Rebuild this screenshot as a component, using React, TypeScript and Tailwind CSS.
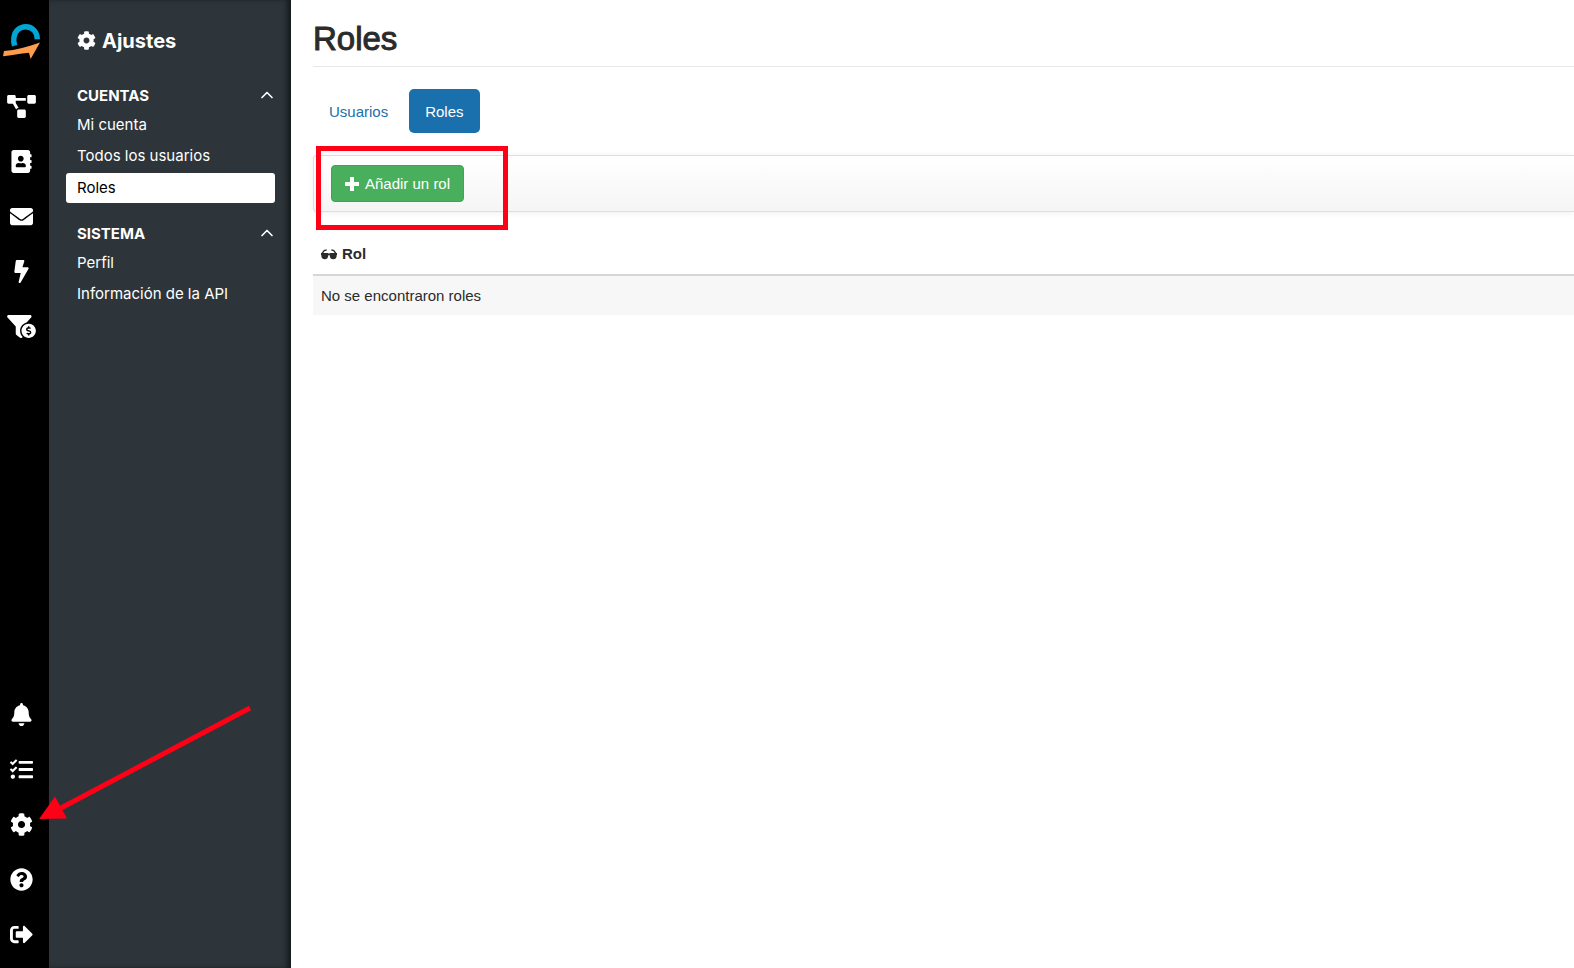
import React, { useState } from "react";
import { ChevronUp } from "lucide-react";
import {
  FaAddressBook,
  FaBell,
  FaBolt,
  FaCog,
  FaEnvelope,
  FaFunnelDollar,
  FaProjectDiagram,
  FaQuestionCircle,
  FaSignOutAlt,
  FaTasks,
} from "react-icons/fa";

const TOP_ICONS = [
  { label: "Canales", icon: <FaProjectDiagram className="w-[29px] h-[23px]" /> },
  { label: "Contactos", icon: <FaAddressBook className="w-[23px] h-[23px]" /> },
  { label: "Correo", icon: <FaEnvelope className="w-[23px] h-[23px]" /> },
  { label: "Automatizaciones", icon: <FaBolt className="w-[23px] h-[23px]" /> },
  { label: "Ventas", icon: <FaFunnelDollar className="w-[29px] h-[23px]" /> },
];

const BOTTOM_ICONS = [
  { id: "alerts", label: "Notificaciones", icon: <FaBell className="w-[23px] h-[23px]" /> },
  { id: "tasks", label: "Tareas", icon: <FaTasks className="w-[23px] h-[23px]" /> },
  { id: "settings", label: "Ajustes", icon: <FaCog className="w-[23px] h-[23px]" /> },
  { id: "help", label: "Ayuda", icon: <FaQuestionCircle className="w-[23px] h-[23px]" /> },
  { id: "logout", label: "Salir", icon: <FaSignOutAlt className="w-[23px] h-[23px]" /> },
];

const SECTIONS = [
  { title: "CUENTAS", links: ["Mi cuenta", "Todos los usuarios", "Roles"] },
  { title: "SISTEMA", links: ["Perfil", "Información de la API"] },
];

const Logo = () => (
  <svg viewBox="0 0 38 40" className="w-[38px] h-10" aria-hidden="true">
    <path
      d="M11.5 25.8C10.6 22.5 10.5 20.5 10.9 17.5 11.8 10.7 17 6.7 22.7 6.7c6.7 0 11.7 5.3 11.6 12.6"
      fill="none"
      stroke="#00a5d3"
      strokeWidth="5.4"
    />
    <path d="M1 31C13 30 25 27 37 22.5L27.600 39 26 32.800C17 33.800 8 35.300 0 36.300Z" fill="#ff9c4e" />
  </svg>
);

const PlusIcon = () => (
  <svg viewBox="0 0 14 14" className="w-[14px] h-[14px]" fill="currentColor" aria-hidden="true">
    <path d="M5 0h4v5h5v4H9v5H5V9H0V5h5z" />
  </svg>
);

const Sunglasses = () => (
  <svg viewBox="0 0 16 11" className="w-4 h-[11px]" fill="currentColor" aria-hidden="true">
    <path d="M0 4h7l.4.5h1.200L9 4h7v2h-.3c0 2.900-1 4.300-3.500 4.300S8.900 9 8.700 6.300H7.300C7.100 9 6.100 10.300 3.800 10.300S.3 8.900.3 6H0z" />
    <path d="M.8 4.800 3.200 1.500 5.700.9M15.200 4.800l-2.400-3.300-2.500-.6" fill="none" stroke="currentColor" strokeWidth="1.400" />
  </svg>
);

const Arrow = () => (
  <svg
    viewBox="0 0 213 115"
    className="absolute left-[39px] bottom-8 w-[213px] h-[115px] z-20 pointer-events-none"
    aria-hidden="true"
  >
    <path d="M22 103 211 3" stroke="#ff0017" strokeWidth="5" />
    <path d="M0 114 16 91.500 28 113.500Z" fill="#ff0017" />
  </svg>
);

const RailLink = ({ label, children }: { label: string; children: React.ReactNode }) => (
  <a href="#" aria-label={label} className="relative flex h-[55px] w-[43px] items-center justify-center text-white">
    {children}
  </a>
);

const Section = ({ title, links }: { title: string; links: string[] }) => {
  const [open, setOpen] = useState(true);

  return (
    <section className="mb-[18px]">
      <button
        type="button"
        aria-expanded={open}
        onClick={() => setOpen(!open)}
        className="flex h-[27px] w-full items-center justify-between pl-[11px] text-[15px] font-bold"
      >
        {title}
        <ChevronUp className={open ? "-mr-[2px] mb-1 w-5 h-5" : "-mr-[2px] mb-1 w-5 h-5 rotate-180"} />
      </button>
      {open && (
        <ul>
          {links.map((link) => (
            <li key={link} className="h-[31px] pt-px">
              <a
                href="#"
                className={
                  link === "Roles"
                    ? "flex h-[30px] items-center rounded-[3px] bg-white pl-[11px] text-black"
                    : "flex h-[30px] items-center pb-[2px] pl-[11px]"
                }
              >
                {link}
              </a>
            </li>
          ))}
        </ul>
      )}
    </section>
  );
};

export default function App() {
  return (
    <div className="flex min-h-screen bg-white font-['Liberation_Sans',Arial,sans-serif] text-[15px] text-[#2b2b2b]">
      <nav className="flex w-[49px] shrink-0 flex-col justify-between bg-black pb-[6px]">
        <div>
          <a href="#" aria-label="Inicio" className="flex h-[79px] items-center pl-[3px]">
            <Logo />
          </a>
          {TOP_ICONS.map(({ label, icon }) => (
            <RailLink key={label} label={label}>{icon}</RailLink>
          ))}
        </div>
        <div>
          {BOTTOM_ICONS.map(({ id, label, icon }) => (
            <RailLink key={id} label={label}>
              {icon}
              {id === "settings" && <Arrow />}
            </RailLink>
          ))}
        </div>
      </nav>

      <aside className="w-[242px] shrink-0 bg-[#2d353a] pl-[17px] pr-4 font-['Inter',sans-serif] text-[15px] text-white shadow-[inset_-5px_0_5px_-1px_#161c1c]">
        <h2 className="flex h-[83px] items-center gap-[6px] pb-[2px] pl-[11px] text-[20px] font-bold">
          <FaCog className="w-[19px] h-[19px]" />
          Ajustes
        </h2>
        {SECTIONS.map((section) => (
          <Section key={section.title} {...section} />
        ))}
      </aside>

      <main className="min-w-0 flex-1 pl-[22px]">
        <h1 className="h-[67px] border-b border-[#e8e8e8] pt-[19px] text-[33px] leading-10 font-medium [-webkit-text-stroke:1px_#2b2b2b]">
          Roles
        </h1>

        <div className="mt-[22px] flex gap-[5px]">
          <a href="#" className="flex h-11 items-center rounded-[5px] px-4 pt-[2px] text-[#1a70ac]">Usuarios</a>
          <a href="#" className="flex h-11 items-center rounded-[5px] bg-[#1a70ac] px-4 pt-[2px] text-white">Roles</a>
        </div>

        <div className="relative mt-[22px] flex h-[57px] items-center rounded-l-[4px] border border-r-0 border-[#dedede] bg-linear-to-b from-white to-[#f5f5f5] pl-[17px] shadow-[0_1px_6px_rgba(0,0,0,0.07)]">
          <button
            type="button"
            className="flex h-[37px] items-center gap-[6px] rounded-[4px] border border-[#3fa552] bg-[#4aaf5c] px-[13px] text-white"
          >
            <PlusIcon />
            <span className="pt-[2px]">Añadir un rol</span>
          </button>
          <div className="pointer-events-none absolute left-[2px] -top-[10px] h-[84px] w-48 border-5 border-[#ff0017]" />
        </div>

        <table className="mt-[21px] w-full text-left">
          <thead>
            <tr className="h-[42px] border-b-2 border-[#d6d6d6]">
              <th className="px-2 pt-[2px] font-bold">
                <span className="flex items-center gap-[5px]">
                  <Sunglasses />
                  Rol
                </span>
              </th>
            </tr>
          </thead>
          <tbody>
            <tr className="h-10 bg-[#f7f7f7]">
              <td className="px-2 pt-px">No se encontraron roles</td>
            </tr>
          </tbody>
        </table>
      </main>
    </div>
  );
}
